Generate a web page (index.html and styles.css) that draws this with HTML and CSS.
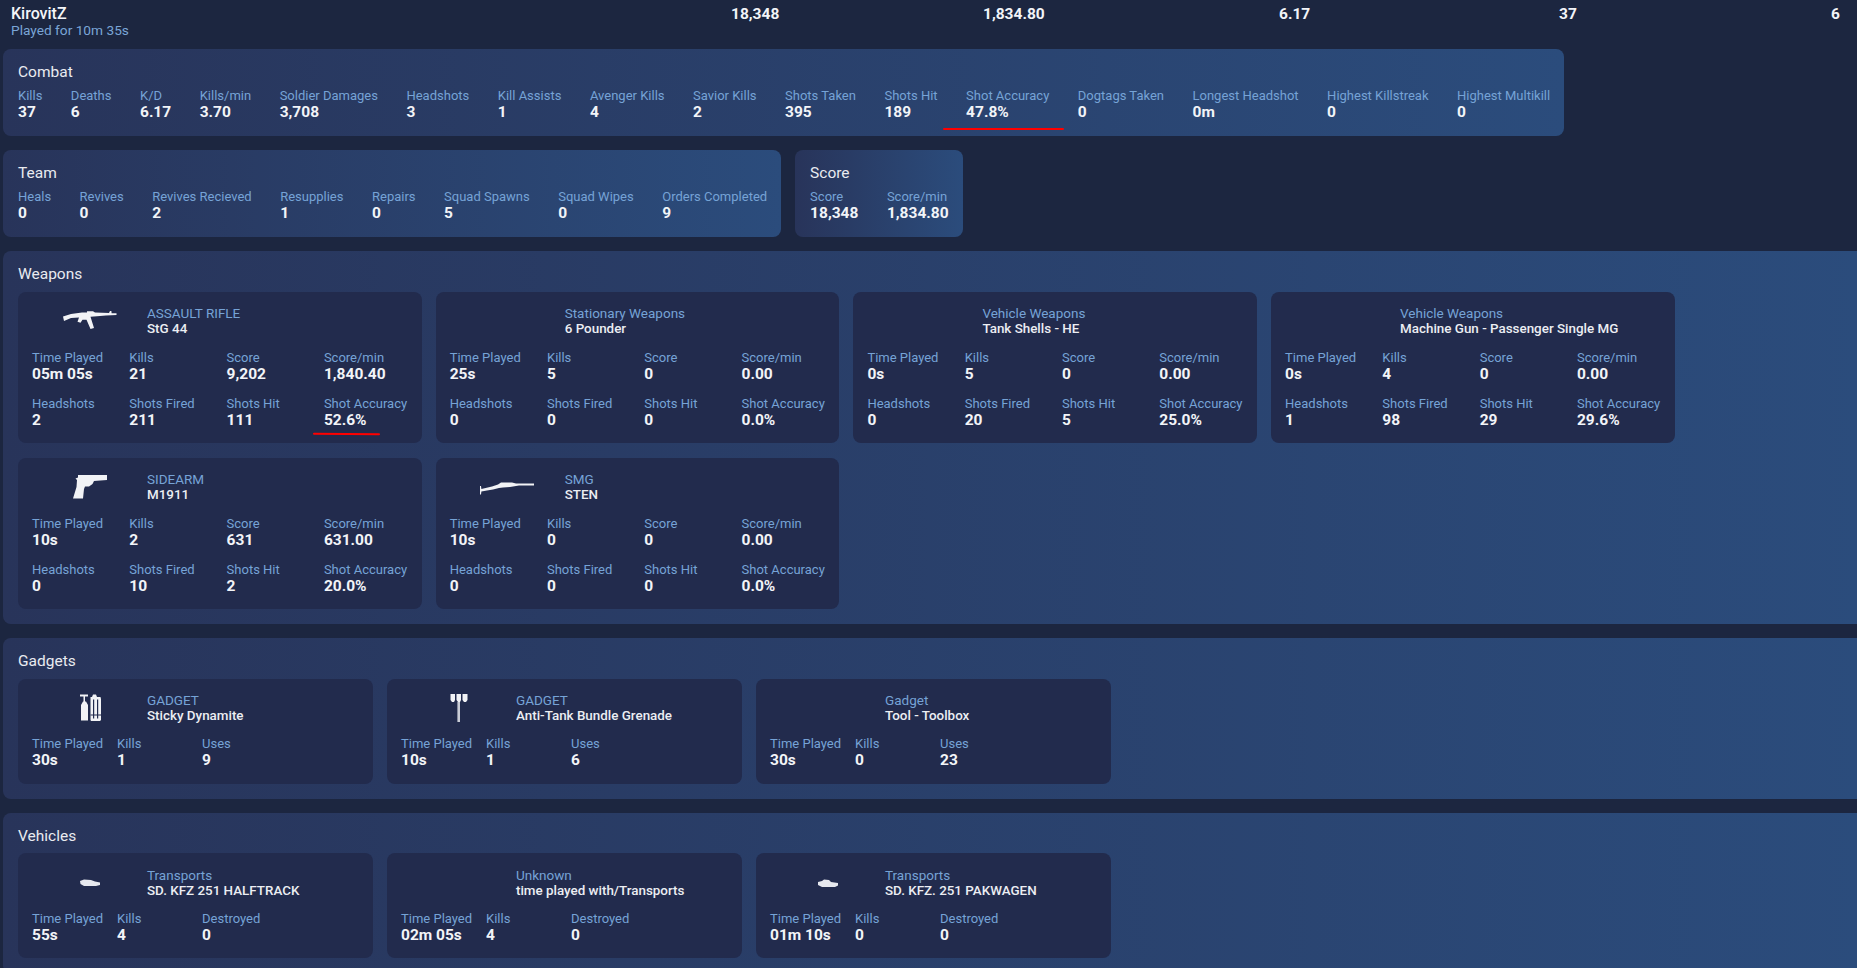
FILE: index.html
```html
<!DOCTYPE html>
<html lang="en">
<head>
<meta charset="utf-8">
<title>KirovitZ stats</title>
<link rel="stylesheet" href="styles.css">
</head>
<body>
<header class="player">
  <div class="player-id"><div class="player-name">KirovitZ</div><div class="player-time">Played for 10m 35s</div></div>
  <div class="player-num">18,348</div>
  <div class="player-num">1,834.80</div>
  <div class="player-num">6.17</div>
  <div class="player-num">37</div>
  <div class="player-num">6</div>
</header>

<div class="panels">
  <section class="panel">
    <h2 class="title">Combat</h2>
    <div class="stats">
      <div class="stat"><div class="lbl">Kills</div><div class="val">37</div></div>
      <div class="stat"><div class="lbl">Deaths</div><div class="val">6</div></div>
      <div class="stat"><div class="lbl">K/D</div><div class="val">6.17</div></div>
      <div class="stat"><div class="lbl">Kills/min</div><div class="val">3.70</div></div>
      <div class="stat"><div class="lbl">Soldier Damages</div><div class="val">3,708</div></div>
      <div class="stat"><div class="lbl">Headshots</div><div class="val">3</div></div>
      <div class="stat"><div class="lbl">Kill Assists</div><div class="val">1</div></div>
      <div class="stat"><div class="lbl">Avenger Kills</div><div class="val">4</div></div>
      <div class="stat"><div class="lbl">Savior Kills</div><div class="val">2</div></div>
      <div class="stat"><div class="lbl">Shots Taken</div><div class="val">395</div></div>
      <div class="stat"><div class="lbl">Shots Hit</div><div class="val">189</div></div>
      <div class="stat marked"><div class="lbl">Shot Accuracy</div><div class="val">47.8%</div><span class="redline redline-wide"></span></div>
      <div class="stat"><div class="lbl">Dogtags Taken</div><div class="val">0</div></div>
      <div class="stat"><div class="lbl">Longest Headshot</div><div class="val">0m</div></div>
      <div class="stat"><div class="lbl">Highest Killstreak</div><div class="val">0</div></div>
      <div class="stat"><div class="lbl">Highest Multikill</div><div class="val">0</div></div>
    </div>
  </section>
</div>

<div class="panels">
  <section class="panel">
    <h2 class="title">Team</h2>
    <div class="stats">
      <div class="stat"><div class="lbl">Heals</div><div class="val">0</div></div>
      <div class="stat"><div class="lbl">Revives</div><div class="val">0</div></div>
      <div class="stat"><div class="lbl">Revives Recieved</div><div class="val">2</div></div>
      <div class="stat"><div class="lbl">Resupplies</div><div class="val">1</div></div>
      <div class="stat"><div class="lbl">Repairs</div><div class="val">0</div></div>
      <div class="stat"><div class="lbl">Squad Spawns</div><div class="val">5</div></div>
      <div class="stat"><div class="lbl">Squad Wipes</div><div class="val">0</div></div>
      <div class="stat"><div class="lbl">Orders Completed</div><div class="val">9</div></div>
    </div>
  </section>
  <section class="panel">
    <h2 class="title">Score</h2>
    <div class="stats">
      <div class="stat"><div class="lbl">Score</div><div class="val">18,348</div></div>
      <div class="stat"><div class="lbl">Score/min</div><div class="val">1,834.80</div></div>
    </div>
  </section>
</div>

<section class="group">
  <h2 class="title">Weapons</h2>
  <div class="cards">
    <article class="card card-weapon">
      <div class="card-head">
        <div class="card-icon"><svg class="pic" width="56" height="24" viewBox="0 0 56 24"><path class="ico" d="M1 7.5 L9 5 L20 3.5 L25 3.5 L25 2.2 L31 2.2 L33 3.6 L47 4 L48 2 L49.4 2 L49.6 4.2 L54.5 4.3 L54.5 6 L44 6.4 L35 7.3 L28.5 7.8 L32 19 L28.5 20 L24.5 10.8 L20.5 10.8 L18.5 13.8 L15.5 12.8 L17 8.6 L9 9 L2 12 Z"/></svg></div>
        <div class="card-text"><div class="lbl">ASSAULT RIFLE</div><div class="card-name">StG 44</div></div>
      </div>
      <div class="grid grid-4">
        <div class="stat"><div class="lbl">Time Played</div><div class="val">05m 05s</div></div>
        <div class="stat"><div class="lbl">Kills</div><div class="val">21</div></div>
        <div class="stat"><div class="lbl">Score</div><div class="val">9,202</div></div>
        <div class="stat"><div class="lbl">Score/min</div><div class="val">1,840.40</div></div>
        <div class="stat"><div class="lbl">Headshots</div><div class="val">2</div></div>
        <div class="stat"><div class="lbl">Shots Fired</div><div class="val">211</div></div>
        <div class="stat"><div class="lbl">Shots Hit</div><div class="val">111</div></div>
        <div class="stat marked"><div class="lbl">Shot Accuracy</div><div class="val">52.6%</div><span class="redline redline-short"></span></div>
      </div>
    </article>
    <article class="card card-weapon">
      <div class="card-head">
        <div class="card-icon"></div>
        <div class="card-text"><div class="lbl">Stationary Weapons</div><div class="card-name">6 Pounder</div></div>
      </div>
      <div class="grid grid-4">
        <div class="stat"><div class="lbl">Time Played</div><div class="val">25s</div></div>
        <div class="stat"><div class="lbl">Kills</div><div class="val">5</div></div>
        <div class="stat"><div class="lbl">Score</div><div class="val">0</div></div>
        <div class="stat"><div class="lbl">Score/min</div><div class="val">0.00</div></div>
        <div class="stat"><div class="lbl">Headshots</div><div class="val">0</div></div>
        <div class="stat"><div class="lbl">Shots Fired</div><div class="val">0</div></div>
        <div class="stat"><div class="lbl">Shots Hit</div><div class="val">0</div></div>
        <div class="stat"><div class="lbl">Shot Accuracy</div><div class="val">0.0%</div></div>
      </div>
    </article>
    <article class="card card-weapon">
      <div class="card-head">
        <div class="card-icon"></div>
        <div class="card-text"><div class="lbl">Vehicle Weapons</div><div class="card-name">Tank Shells - HE</div></div>
      </div>
      <div class="grid grid-4">
        <div class="stat"><div class="lbl">Time Played</div><div class="val">0s</div></div>
        <div class="stat"><div class="lbl">Kills</div><div class="val">5</div></div>
        <div class="stat"><div class="lbl">Score</div><div class="val">0</div></div>
        <div class="stat"><div class="lbl">Score/min</div><div class="val">0.00</div></div>
        <div class="stat"><div class="lbl">Headshots</div><div class="val">0</div></div>
        <div class="stat"><div class="lbl">Shots Fired</div><div class="val">20</div></div>
        <div class="stat"><div class="lbl">Shots Hit</div><div class="val">5</div></div>
        <div class="stat"><div class="lbl">Shot Accuracy</div><div class="val">25.0%</div></div>
      </div>
    </article>
    <article class="card card-weapon">
      <div class="card-head">
        <div class="card-icon"></div>
        <div class="card-text"><div class="lbl">Vehicle Weapons</div><div class="card-name">Machine Gun - Passenger Single MG</div></div>
      </div>
      <div class="grid grid-4">
        <div class="stat"><div class="lbl">Time Played</div><div class="val">0s</div></div>
        <div class="stat"><div class="lbl">Kills</div><div class="val">4</div></div>
        <div class="stat"><div class="lbl">Score</div><div class="val">0</div></div>
        <div class="stat"><div class="lbl">Score/min</div><div class="val">0.00</div></div>
        <div class="stat"><div class="lbl">Headshots</div><div class="val">1</div></div>
        <div class="stat"><div class="lbl">Shots Fired</div><div class="val">98</div></div>
        <div class="stat"><div class="lbl">Shots Hit</div><div class="val">29</div></div>
        <div class="stat"><div class="lbl">Shot Accuracy</div><div class="val">29.6%</div></div>
      </div>
    </article>
    <article class="card card-weapon">
      <div class="card-head">
        <div class="card-icon"><svg class="pic" width="36" height="28" viewBox="0 0 36 28"><path class="ico" d="M6 2 L35 2 L35 7 L22 8 L20.5 11 L17 13.5 L13 13.5 L12 16 L11 25.5 L1 25.5 L4.5 14 L5 7 L3.5 5.5 L6 4.5 Z"/></svg></div>
        <div class="card-text"><div class="lbl">SIDEARM</div><div class="card-name">M1911</div></div>
      </div>
      <div class="grid grid-4">
        <div class="stat"><div class="lbl">Time Played</div><div class="val">10s</div></div>
        <div class="stat"><div class="lbl">Kills</div><div class="val">2</div></div>
        <div class="stat"><div class="lbl">Score</div><div class="val">631</div></div>
        <div class="stat"><div class="lbl">Score/min</div><div class="val">631.00</div></div>
        <div class="stat"><div class="lbl">Headshots</div><div class="val">0</div></div>
        <div class="stat"><div class="lbl">Shots Fired</div><div class="val">10</div></div>
        <div class="stat"><div class="lbl">Shots Hit</div><div class="val">2</div></div>
        <div class="stat"><div class="lbl">Shot Accuracy</div><div class="val">20.0%</div></div>
      </div>
    </article>
    <article class="card card-weapon">
      <div class="card-head">
        <div class="card-icon"><svg class="pic" width="56" height="20" viewBox="0 0 56 20"><path class="ico" d="M1 9 L2 9 L2.4 12 L13 9.5 L19 7.5 L22 5.5 L33 5.5 L37 6.6 L55 6.6 L55 8.4 L40 8.6 L31 10 L24 10.6 L20 11 L14 12.4 L8 13.4 L2.4 14.6 L2 17.5 L1 17.5 Z"/></svg></div>
        <div class="card-text"><div class="lbl">SMG</div><div class="card-name">STEN</div></div>
      </div>
      <div class="grid grid-4">
        <div class="stat"><div class="lbl">Time Played</div><div class="val">10s</div></div>
        <div class="stat"><div class="lbl">Kills</div><div class="val">0</div></div>
        <div class="stat"><div class="lbl">Score</div><div class="val">0</div></div>
        <div class="stat"><div class="lbl">Score/min</div><div class="val">0.00</div></div>
        <div class="stat"><div class="lbl">Headshots</div><div class="val">0</div></div>
        <div class="stat"><div class="lbl">Shots Fired</div><div class="val">0</div></div>
        <div class="stat"><div class="lbl">Shots Hit</div><div class="val">0</div></div>
        <div class="stat"><div class="lbl">Shot Accuracy</div><div class="val">0.0%</div></div>
      </div>
    </article>
  </div>
</section>

<section class="group">
  <h2 class="title">Gadgets</h2>
  <div class="cards">
    <article class="card card-small">
      <div class="card-head">
        <div class="card-icon"><svg class="pic" width="24" height="30" viewBox="0 0 24 30"><path class="ico" d="M2 1.5 H10 V3.5 H7 V8.5 H8 L10 12 V27.5 H3 V12 L5 8.5 H5.5 V3.5 H2 Z M12.5 4 L14 4 L15 1.5 L18 1.5 L19 4 L22.5 4 L23 6 V27 L22 28 H13 L12.5 27 Z"/><path class="ico-cut" d="M15.6 6.5 V25.5 M19.6 6.5 V25.5 M12.5 22 H23"/></svg></div>
        <div class="card-text"><div class="lbl">GADGET</div><div class="card-name">Sticky Dynamite</div></div>
      </div>
      <div class="grid grid-3">
        <div class="stat"><div class="lbl">Time Played</div><div class="val">30s</div></div>
        <div class="stat"><div class="lbl">Kills</div><div class="val">1</div></div>
        <div class="stat"><div class="lbl">Uses</div><div class="val">9</div></div>
      </div>
    </article>
    <article class="card card-small">
      <div class="card-head">
        <div class="card-icon"><svg class="pic" width="18" height="30" viewBox="0 0 18 30"><path class="ico" d="M0.5 1 H5 V7 L4 9 L2 9 L0.5 7 Z M6.5 1 H11 V7 L10 9 L8 9 L6.5 7 Z M12.5 1 H17.5 V7 L16 9 L14 9 L12.5 7 Z"/><path class="ico-dim" d="M7.4 9 H10 V29 H7.4 Z"/></svg></div>
        <div class="card-text"><div class="lbl">GADGET</div><div class="card-name">Anti-Tank Bundle Grenade</div></div>
      </div>
      <div class="grid grid-3">
        <div class="stat"><div class="lbl">Time Played</div><div class="val">10s</div></div>
        <div class="stat"><div class="lbl">Kills</div><div class="val">1</div></div>
        <div class="stat"><div class="lbl">Uses</div><div class="val">6</div></div>
      </div>
    </article>
    <article class="card card-small">
      <div class="card-head">
        <div class="card-icon"></div>
        <div class="card-text"><div class="lbl">Gadget</div><div class="card-name">Tool - Toolbox</div></div>
      </div>
      <div class="grid grid-3">
        <div class="stat"><div class="lbl">Time Played</div><div class="val">30s</div></div>
        <div class="stat"><div class="lbl">Kills</div><div class="val">0</div></div>
        <div class="stat"><div class="lbl">Uses</div><div class="val">23</div></div>
      </div>
    </article>
  </div>
</section>

<section class="group">
  <h2 class="title">Vehicles</h2>
  <div class="cards">
    <article class="card card-small">
      <div class="card-head">
        <div class="card-icon"><svg class="pic" width="22" height="10" viewBox="0 0 22 10"><path class="ico-soft" d="M1 3 L5 1.5 L12 2 L16 3.5 L21 4.5 L21 7 L17 8 L5 8 L1.5 6 Z"/></svg></div>
        <div class="card-text"><div class="lbl">Transports</div><div class="card-name">SD. KFZ 251 HALFTRACK</div></div>
      </div>
      <div class="grid grid-3">
        <div class="stat"><div class="lbl">Time Played</div><div class="val">55s</div></div>
        <div class="stat"><div class="lbl">Kills</div><div class="val">4</div></div>
        <div class="stat"><div class="lbl">Destroyed</div><div class="val">0</div></div>
      </div>
    </article>
    <article class="card card-small">
      <div class="card-head">
        <div class="card-icon"></div>
        <div class="card-text"><div class="lbl">Unknown</div><div class="card-name">time played with/Transports</div></div>
      </div>
      <div class="grid grid-3">
        <div class="stat"><div class="lbl">Time Played</div><div class="val">02m 05s</div></div>
        <div class="stat"><div class="lbl">Kills</div><div class="val">4</div></div>
        <div class="stat"><div class="lbl">Destroyed</div><div class="val">0</div></div>
      </div>
    </article>
    <article class="card card-small">
      <div class="card-head">
        <div class="card-icon"><svg class="pic" width="22" height="11" viewBox="0 0 22 11"><path class="ico-soft" d="M1 4 L5 3 L7 1.5 L12 2 L14 4 L21 5 L21 7.5 L18 9 L5 9 L1 7 Z"/></svg></div>
        <div class="card-text"><div class="lbl">Transports</div><div class="card-name">SD. KFZ. 251 PAKWAGEN</div></div>
      </div>
      <div class="grid grid-3">
        <div class="stat"><div class="lbl">Time Played</div><div class="val">01m 10s</div></div>
        <div class="stat"><div class="lbl">Kills</div><div class="val">0</div></div>
        <div class="stat"><div class="lbl">Destroyed</div><div class="val">0</div></div>
      </div>
    </article>
  </div>
</section>
</body>
</html>
```
FILE: styles.css
```css
* { box-sizing: border-box; }
html, body { height: 968px; overflow: hidden; }
body {
  margin: 0;
  padding: 0 0 0 3px;
  background: #1c2640;
  color: #f2f4f8;
  font-family: Roboto, "Liberation Sans", sans-serif;
  font-size: 13px;
}
.player {
  display: grid;
  grid-template-columns: 720px 252px 296px 280px 272px 1fr;
  padding: 5px 0 0 8px;
  height: 49px;
}
.player-name { font-size: 16px; font-weight: 500; line-height: 17px; color: #f4f5f8; }
.player-time { font-size: 13.7px; line-height: 16px; color: #7aa5d6; }
.player-num { padding-top: 1px; font-size: 15.5px; font-weight: 700; line-height: 17px; color: #f2f4f8; }
.panels { display: flex; gap: 14px; margin-bottom: 14px; }
.panel {
  padding: 13px 14px 0 15px;
  height: 87px;
  border-radius: 8px;
  background: linear-gradient(90deg, #28345a, #2b4c7c);
}
.title {
  margin: 0 0 6px;
  font-size: 15.5px;
  font-weight: 400;
  line-height: 20px;
  color: #e9ebf0;
}
.stats { display: flex; gap: 28.5px; }
.stat { position: relative; }
.lbl { font-size: 13px; line-height: 15px; color: #76a3d6; white-space: nowrap; }
.val { padding-top: 1px; font-size: 15.5px; font-weight: 700; line-height: 16px; color: #f2f4f8; white-space: nowrap; }
.redline { position: absolute; background: #f00; border-radius: 1px; }
.redline-wide { left: -23px; top: 40px; width: 121px; height: 2px; }
.redline-short { left: -11px; top: 37px; width: 67px; height: 2px; transform: rotate(0.6deg); }
.group {
  margin-bottom: 14.5px;
  padding: 13px 15px 15px;
  border-radius: 8px 0 0 8px;
  background: linear-gradient(90deg, #28345a, #2b4c7c);
}
.group > .title { margin-bottom: 7.5px; }
.group:last-child > .title { margin-bottom: 7px; }
.group:last-child .card { padding-top: 15px; }
.cards { display: flex; flex-wrap: wrap; column-gap: 14px; row-gap: 15px; }
.card {
  padding: 14px 14px 0;
  border-radius: 8px;
  background: #222b4d;
}
.card-weapon { width: 403.7px; height: 151px; }
.card-small { width: 355px; height: 105px; }
.card-head { display: flex; height: 30px; margin-bottom: 14px; }
.card-small .card-head { margin-bottom: 13px; }
.card-icon { width: 115px; flex: none; display: flex; align-items: center; justify-content: center; }
.card-text .lbl { font-size: 13.5px; }
.card-name { font-size: 13.4px; font-weight: 500; line-height: 15px; color: #eceef3; white-space: nowrap; }
.grid { display: grid; row-gap: 14px; }
.grid-4 { grid-template-columns: repeat(4, 97.3px); }
.grid-3 { grid-template-columns: repeat(3, 85px); }
.pic { filter: blur(0.35px); }
.ico { fill: #f2f3f6; }
.ico-dim { fill: #c9ccd6; }
.ico-soft { fill: #e6e8ee; }
.ico-cut { fill: none; stroke: #222b4d; stroke-width: 1.2; }
```
